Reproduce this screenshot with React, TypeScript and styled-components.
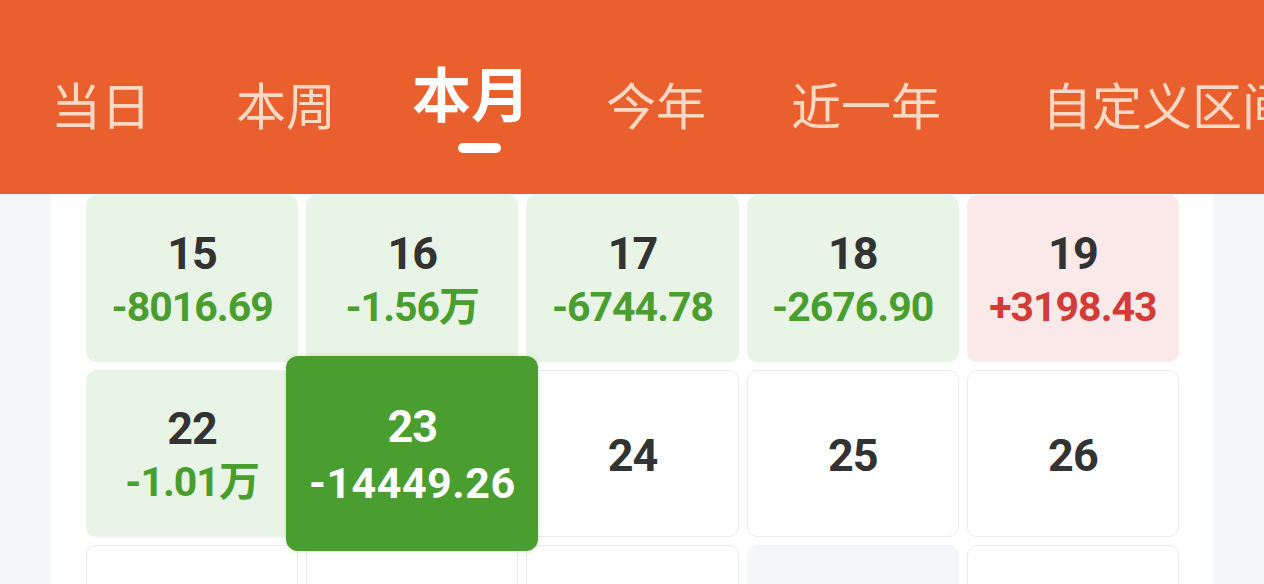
import React from "react";
import styled, { createGlobalStyle, css } from "styled-components";

const GlobalStyle = createGlobalStyle`
  html, body {
    margin: 0;
    padding: 0;
    overflow: hidden;
    background: #f5f6f8;
  }
  * { box-sizing: border-box; }
`;

const Page = styled.div`
  width: 1264px;
  height: 584px;
  overflow: hidden;
  display: flex;
  flex-direction: column;
  background: #f5f6f8;
`;

const Header = styled.header`
  flex: none;
  height: 194px;
  background: #e95f2e;
  overflow: hidden;
`;

const TabBar = styled.nav`
  display: flex;
  align-items: flex-start;
  gap: 85px;
  padding: 78px 0 0 51px;
  white-space: nowrap;
`;

const Tab = styled.div`
  flex: none;
  display: flex;
  flex-direction: column;
  align-items: center;
  &:last-child {
    margin-left: 16px;
  }
`;

const TabLabel = styled.span<{ $active?: boolean }>`
  display: block;
  font-family: "Noto Sans CJK SC", "Noto Sans", sans-serif;
  font-size: 50px;
  line-height: 50px;
  font-weight: 400;
  color: #fdd8c2;
  ${(p) =>
    p.$active &&
    css`
      color: #ffffff;
      font-weight: 700;
      transform: translateY(-12px) scale(1.18);
    `}
`;

const Indicator = styled.span<{ $active?: boolean }>`
  display: block;
  width: 43px;
  height: 10px;
  margin-top: 15px;
  margin-left: 16px;
  border-radius: 5px;
  background: ${(p) => (p.$active ? "#ffffff" : "transparent")};
`;

const Panel = styled.main`
  flex: 1;
  margin: 0 51px;
  background: #ffffff;
  padding: 1px 34px 0 35px;
`;

const Grid = styled.div`
  display: grid;
  grid-template-columns: repeat(5, 1fr);
  grid-auto-rows: 167px;
  gap: 8px;
`;

type Kind = "loss" | "gain" | "empty" | "blank" | "selected";

const cellBg: Record<Kind, string> = {
  loss: "#e8f4e5",
  gain: "#fbe9e9",
  empty: "#ffffff",
  blank: "#f5f6f8",
  selected: "#4a9e2f",
};

const Cell = styled.div<{ $kind: Kind }>`
  display: flex;
  flex-direction: column;
  align-items: center;
  justify-content: center;
  padding-top: 4px;
  border-radius: 10px;
  background: ${(p) => cellBg[p.$kind]};
  border: ${(p) => (p.$kind === "empty" ? "1px solid #ebebeb" : "none")};
  font-family: Roboto, "Noto Sans CJK SC", sans-serif;
  font-weight: 700;
  ${(p) =>
    p.$kind === "selected" &&
    css`
      position: relative;
      z-index: 1;
      margin: -14px -20px;
      padding-top: 6px;
      border-radius: 12px;
      box-shadow: 0 0 4px rgba(74, 158, 47, 0.25);
    `}
`;

const DayNum = styled.div<{ $light?: boolean }>`
  font-size: 45px;
  line-height: 52px;
  letter-spacing: -1px;
  color: ${(p) => (p.$light ? "#ffffff" : "#333333")};
`;

const Amount = styled.div<{ $tone: "loss" | "gain" | "light" }>`
  font-size: 41px;
  line-height: 54px;
  letter-spacing: -1px;
  color: ${(p) =>
    p.$tone === "loss" ? "#4a9e30" : p.$tone === "gain" ? "#d33b36" : "#ffffff"};
  ${(p) =>
    p.$tone === "light" &&
    css`
      font-size: 43px;
      line-height: 60px;
      letter-spacing: 0.5px;
    `}
`;

const tabs = ["当日", "本周", "本月", "今年", "近一年", "自定义区间"];
const activeTab = "本月";

type Day = { day?: string; amount?: string; kind: Kind };

const days: Day[] = [
  { day: "15", amount: "-8016.69", kind: "loss" },
  { day: "16", amount: "-1.56万", kind: "loss" },
  { day: "17", amount: "-6744.78", kind: "loss" },
  { day: "18", amount: "-2676.90", kind: "loss" },
  { day: "19", amount: "+3198.43", kind: "gain" },
  { day: "22", amount: "-1.01万", kind: "loss" },
  { day: "23", amount: "-14449.26", kind: "selected" },
  { day: "24", kind: "empty" },
  { day: "25", kind: "empty" },
  { day: "26", kind: "empty" },
  { kind: "empty" },
  { kind: "empty" },
  { kind: "empty" },
  { kind: "blank" },
  { kind: "empty" },
];

export default function App() {
  return (
    <>
      <GlobalStyle />
      <Page>
        <Header>
          <TabBar>
            {tabs.map((t) => {
              const active = t === activeTab;
              return (
                <Tab key={t}>
                  <TabLabel $active={active}>{t}</TabLabel>
                  <Indicator $active={active} />
                </Tab>
              );
            })}
          </TabBar>
        </Header>
        <Panel>
          <Grid>
            {days.map((d, i) => {
              const sel = d.kind === "selected";
              return (
                <Cell key={i} $kind={d.kind}>
                  {d.day && <DayNum $light={sel}>{d.day}</DayNum>}
                  {d.amount && (
                    <Amount $tone={sel ? "light" : d.kind === "gain" ? "gain" : "loss"}>
                      {d.amount}
                    </Amount>
                  )}
                </Cell>
              );
            })}
          </Grid>
        </Panel>
      </Page>
    </>
  );
}
